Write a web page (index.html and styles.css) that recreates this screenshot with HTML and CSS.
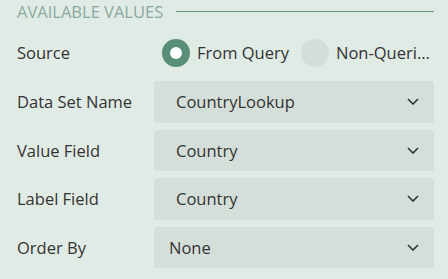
FILE: index.html
```html
<!DOCTYPE html>
<html lang="en">
<head>
    <meta charset="UTF-8">
    <meta name="viewport" content="width=device-width, initial-scale=1.0">
    <title>Available Values</title>
    <link rel="stylesheet" href="styles.css">
</head>
<body>

    <div class="panel">
        <div class="section-title">
            <span>Available Values</span>
            <div class="rule"></div>
        </div>

        <div class="row">
            <div class="label">Source</div>
            <div class="radios">
                <label class="radio checked"><span class="dot"></span>From Query</label>
                <label class="radio"><span class="dot"></span>Non-Queri...</label>
            </div>
        </div>

        <div class="row">
            <div class="label">Data Set Name</div>
            <div class="select"><span class="value">CountryLookup</span><svg class="chev" width="12" height="7" viewBox="0 0 12 7"><path d="M1 1l5 5 5-5" fill="none" stroke="#333" stroke-width="1.6"/></svg></div>
        </div>
        <div class="row">
            <div class="label">Value Field</div>
            <div class="select"><span class="value">Country</span><svg class="chev" width="12" height="7" viewBox="0 0 12 7"><path d="M1 1l5 5 5-5" fill="none" stroke="#333" stroke-width="1.6"/></svg></div>
        </div>
        <div class="row">
            <div class="label">Label Field</div>
            <div class="select"><span class="value">Country</span><svg class="chev" width="12" height="7" viewBox="0 0 12 7"><path d="M1 1l5 5 5-5" fill="none" stroke="#333" stroke-width="1.6"/></svg></div>
        </div>
        <div class="row">
            <div class="label">Order By</div>
            <div class="select"><span class="value none">None</span><svg class="chev" width="12" height="7" viewBox="0 0 12 7"><path d="M1 1l5 5 5-5" fill="none" stroke="#333" stroke-width="1.6"/></svg></div>
        </div>
    </div>

</body>
</html>
```

FILE: styles.css
```css
body {
    margin: 0;
    background-color: #e1ebe5;
    font-family: "Open Sans", sans-serif;
    font-size: 16.5px;
    color: #333;
    white-space: nowrap;
}
.panel {
    padding: 2px 14px 0 17px;
}
.section-title {
    display: flex;
    align-items: center;
    height: 18px;
    color: #8aa9a1;
    text-transform: uppercase;
}
.rule {
    flex: 1;
    height: 1px;
    background-color: #5e967c;
    margin-left: 13px;
}
.row {
    display: flex;
    align-items: center;
    height: 41.5px;
    margin-top: 7px;
}
.row:nth-child(2) {
    margin-top: 11px;
    height: 43px;
}
.label {
    width: 137px;
    flex-shrink: 0;
}
.radios {
    display: flex;
    align-items: center;
    margin-left: 8px;
    flex: 1;
    min-width: 0;
}
.radio {
    display: flex;
    align-items: center;
    flex-shrink: 0;
    margin-right: 12px;
}
.dot {
    width: 28px;
    height: 28px;
    border-radius: 50%;
    background-color: #d5ddd8;
    margin-right: 7px;
    box-sizing: border-box;
}
.checked .dot {
    background-color: #5a8f77;
    border: 8px solid #5a8f77;
}
.checked .dot::after {
    content: "";
    display: block;
    width: 12px;
    height: 12px;
    border-radius: 50%;
    background-color: white;
}
.select {
    flex: 1;
    height: 41.5px;
    display: flex;
    align-items: center;
    justify-content: space-between;
    background-color: #d5dfd9;
    border-radius: 3px;
    padding: 0 15px 0 22px;
}
.value.none {
    margin-left: -7px;
}
```
